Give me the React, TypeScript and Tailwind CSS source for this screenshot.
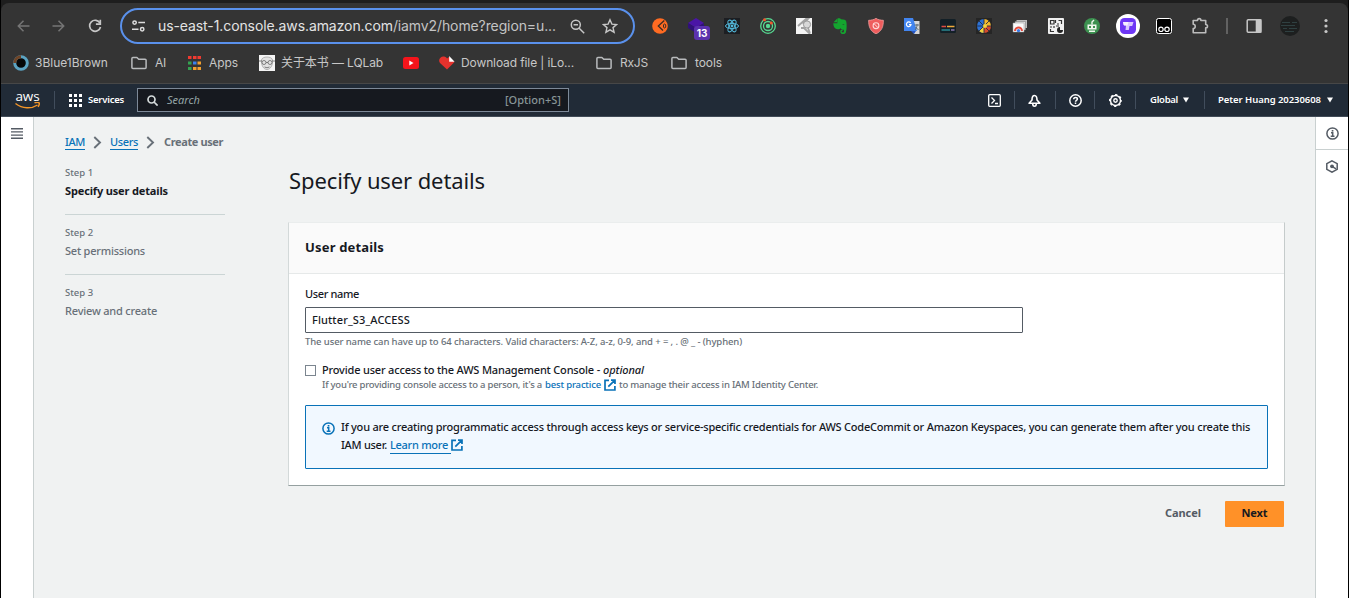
import React from "react";

type TProps = { className?: string; children: string };
function T({ className = "", children }: TProps) {
  return <span className={`whitespace-nowrap ${className}`}>{children}</span>;
}

function Folder() {
  return (
    <svg width="16" height="16" viewBox="0 0 16 16" fill="none" stroke="#b9bbbd" strokeWidth="1.5" strokeLinejoin="round">
      <path d="M0.9 12.6V3.4c0-.6.4-1 1-1h4l1.8 1.9h6.4c.6 0 1 .4 1 1v7.300c0 .6-.4 1-1 1H1.900c-.6 0-1-.4-1-1z" />
    </svg>
  );
}

function ExternalIcon() {
  return (
    <svg className="shrink-0" width="12" height="12" viewBox="0 0 12 12" fill="none" stroke="#0972b8" strokeWidth="1.7">
      <path d="M5 1.300H1v9.700h9.900V7M7 1.100h4v4M10.900 1.200L4.300 7.700" />
    </svg>
  );
}

function InfoIcon({ color, size }: { color: string; size: number }) {
  return (
    <svg width={size} height={size} viewBox="0 0 13 13" fill="none" stroke={color}>
      <circle cx="6.500" cy="6.500" r="5.600" strokeWidth="1.500" />
      <path d="M5 5.800h1.700v3.400M4.700 9.300h3.800" strokeWidth="1.500" />
      <path d="M5.700 3h1.700v1.600H5.700z" fill={color} stroke="none" />
    </svg>
  );
}

function Caret() {
  return <svg width="6" height="6" viewBox="0 0 6 6" fill="#fff"><path d="M0 .4h6L3 5.600z" /></svg>;
}

function Chevron() {
  return (
    <svg width="9" height="13" viewBox="0 0 9 13" fill="none" stroke="#687078" strokeWidth="1.900">
      <path d="M1.300 1l5.700 5.500-5.700 5.500" />
    </svg>
  );
}

function Extensions() {
  const cell = "relative flex h-9 w-9 items-center justify-center";
  return (
    <div className="flex items-center">
      <div className={cell}>
        <svg width="16" height="16" viewBox="0 0 16 16"><circle cx="8" cy="8" r="7.800" fill="#ff6b22" /><path d="M12.300 2.500L6.300 8l4.700 4.500" fill="none" stroke="#3a2c24" strokeWidth="1.300" /><ellipse cx="12.600" cy="8" rx="1.200" ry="2" fill="none" stroke="#3a2c24" strokeWidth="1" /></svg>
      </div>
      <div className={cell}>
        <svg width="16" height="16" viewBox="0 0 16 16"><path d="M8 0l8 5-8 5-8-5z" fill="#4a15a6" /><path d="M0 5l8 5 8-5v5l-8 5-8-5z" fill="#30107a" /></svg>
        <span className="absolute left-[16px] top-[18px] flex h-[14px] w-[16px] items-center justify-center rounded-[3px] bg-[#5b32ad] font-['Inter'] text-[10px] font-bold tracking-[-0.2px] text-white">13</span>
      </div>
      <div className={cell}>
        <svg width="16" height="16" viewBox="0 0 16 16"><path d="M0 0h16v16H0z" fill="#1c1e22" /><g fill="none" stroke="#53b9db" strokeWidth="1"><ellipse cx="8" cy="8" rx="6.500" ry="2.600" /><ellipse cx="8" cy="8" rx="6.500" ry="2.600" transform="rotate(60 8 8)" /><ellipse cx="8" cy="8" rx="6.500" ry="2.600" transform="rotate(120 8 8)" /></g><circle cx="8" cy="8" r="1.400" fill="#53b9db" /></svg>
      </div>
      <div className={cell}>
        <svg width="16" height="16" viewBox="0 0 16 16" fill="none" stroke="#57d992" strokeWidth="1.300"><circle cx="8" cy="8" r="7.300" /><circle cx="8" cy="8" r="4.500" /><circle cx="8" cy="8" r="2.200" fill="#57d992" stroke="none" /><circle cx="4.500" cy="1.700" r="1.500" fill="#f1572c" stroke="none" /><circle cx="11.300" cy="5" r="1.500" fill="#f1572c" stroke="none" /></svg>
      </div>
      <div className={cell}>
        <svg width="16" height="16" viewBox="0 0 16 16"><path d="M0 0h16v16H0z" fill="#f4f4f4" /><path d="M2 8l8-7h2L7 6M5 10h3l6 6M12 10l2 5" fill="none" stroke="#a2a2a2" strokeWidth="1.800" /><circle cx="11" cy="6.500" r="3.600" fill="#d8d8d8" stroke="#999" /></svg>
      </div>
      <div className={cell}>
        <svg width="16" height="16" viewBox="0 0 16 16" fill="#14a52f"><path d="M1.500 4.300L5 .8v3.500zM1.300 5.200h4V.7c1-.7 3-.6 3.700.6 3 0 5 .7 5.300 2.400.6 3.300.5 7.500-.4 10.500-.3 1-1.200 1.800-2.600 1.800-2.300 0-3-1.200-3-2.600 0-1.300.8-2 2.300-2v1.500c-.8 0-1 .2-1 .7 0 .7.600.8 1.400.8.9 0 1-.8 1-1.600 0-1-.5-1.400-1.600-1.400-1 0-1.600-.4-1.800-1.400-.5 1.200-1.600 1.300-3 1.200C2.500 10.900 1.300 8 1.300 5.200z" /><path d="M10.300 6.300c.8-.4 1.800-.2 2.200.6z" fill="#323232" /></svg>
      </div>
      <div className={cell}>
        <svg width="16" height="16" viewBox="0 0 16 16"><path d="M8 .3c2 1.400 4.500 1.900 7.400 2C15.500 9 13.500 13.300 8 15.900 2.500 13.300.5 9 .6 2.300 3.500 2.200 6 1.700 8 .3z" fill="#ef5d5d" stroke="#f4a6a6" strokeWidth=".7" /><circle cx="8" cy="7.700" r="2.900" fill="none" stroke="#ffd7d7" strokeWidth="1.100" /><path d="M6 5.700l4 4" stroke="#ffd7d7" /></svg>
      </div>
      <div className={cell}>
        <svg width="16" height="16" viewBox="0 0 16 16"><path d="M7 3h8.500v13H10z" fill="#d6d6d6" /><path d="M0 0h9l4 13H0z" fill="#4285f0" /><path d="M7 13h5l-2 3z" fill="#2657c4" /><path d="M6.600 4.900A2.300 2.300 0 1 0 7 6.700H5" fill="none" stroke="#fff" strokeWidth="1.200" /><path d="M10.500 7h4.500M13 6v1c0 2-1 4-2 5M11.500 9l3 3" fill="none" stroke="#5e6b73" /></svg>
      </div>
      <div className={cell}>
        <svg width="16" height="16" viewBox="0 0 16 16"><rect y="1" width="16" height="14" rx="1.500" fill="#132027" /><path d="M1.500 8.500H6" stroke="#dd4c45" strokeWidth="1.500" /><path d="M7 8.500h7.500" stroke="#f0a93a" strokeWidth="1.500" /><path d="M1.500 12H10" stroke="#2b8791" strokeWidth="1.500" /><path d="M11 12h3.500" stroke="#8e74b4" strokeWidth="1.500" /></svg>
      </div>
      <div className={cell}>
        <svg width="16" height="16" viewBox="0 0 16 16"><path d="M0 0h16v16H0z" fill="#252525" /><path d="M8 1a7 7 0 0 0 0 14z" fill="#2d72d5" /><path d="M8 1a7 7 0 0 1 7 7H8z" fill="#f4b92c" /><path d="M15 8a7 7 0 0 1-7 7V8z" fill="#d74b2b" /><path d="M8 15a7 7 0 0 1-5-2l5-5z" fill="#f0d23c" /><path d="M8 1v14M1 8h14M3 3l10 10M13 3L3 13" stroke="#222c49" strokeWidth=".9" /><circle cx="9" cy="8" r="2" fill="#f5d33c" /></svg>
      </div>
      <div className={cell}>
        <svg width="16" height="16" viewBox="0 0 16 16"><path d="M4.500 2H15v8H4.500z" fill="#bdbdbd" /><path d="M3 3.500h10.500V12H3z" fill="#dedede" stroke="#777" strokeWidth=".5" /><path d="M1 5h11v9H1z" fill="#fafafa" stroke="#999" strokeWidth=".5" /><path d="M3 13a3.500 3.500 0 0 1 7 0" fill="none" stroke="#e34b3d" strokeWidth="2" /><circle cx="6.500" cy="12.600" r="1.700" fill="#3a7ce8" /></svg>
      </div>
      <div className={cell}>
        <svg width="16" height="16" viewBox="0 0 16 16"><rect width="16" height="16" rx="1" fill="#f0f0f0" /><g fill="none" stroke="#333" strokeWidth="1.200"><path d="M2.500 2.500H6V6H2.500zM10.500 2.500h3V6M7.500 2v3M9 6h2M2 9h2M6 8v2M2.500 11v2.500H6M8 8h3" /></g><path d="M12 9v3h3a3 3 0 1 1-3-3z" fill="#222" /></svg>
      </div>
      <div className={cell}>
        <svg width="16" height="16" viewBox="0 0 16 16"><circle cx="8" cy="8" r="8" fill="#3c9150" /><path d="M3.500 6.500h9v5h-9zM5 12.500h6V14H5z" fill="#f1f8ef" /><path d="M8 6.500V4l2-2" fill="none" stroke="#f1f8ef" strokeWidth="1.400" /><path d="M5 8h2v2H5zM9 8h2v2H9z" fill="#3c9150" /></svg>
      </div>
      <div className={cell}>
        <svg width="24" height="24" viewBox="0 0 24 24"><circle cx="12" cy="12" r="12" fill="#fff" /><rect x="4" y="4" width="16" height="16" rx="4.500" fill="#6e37f5" /><path d="M7 8h10.500l-1.300 4H13.500l-.7 4h-3.300l.5-4.500L7.500 11z" fill="#d9c8ff" /><path d="M7 8h5.500l-1 3.500H8z" fill="#f6f0ff" /></svg>
      </div>
      <div className={cell}>
        <svg width="16" height="16" viewBox="0 0 16 16"><rect x=".5" y=".5" width="15" height="15" rx="2" fill="#000" stroke="#fff" /><g fill="none" stroke="#fff" strokeWidth="1.200"><circle cx="5" cy="11.300" r="2.200" /><circle cx="11" cy="11.300" r="2.200" /></g></svg>
      </div>
      <div className={cell}>
        <svg width="18" height="18" viewBox="0 0 18 18" fill="none" stroke="#bcbcbc" strokeWidth="1.600" strokeLinejoin="round"><path d="M2.200 3.500h4.300C6.500 1 9.900 1 9.900 3.500h4.800v4c2.400 0 2.400 3.400 0 3.400v4.800H2.200v-4.200c2.700-.2 2.700-4 0-4.200z" /></svg>
      </div>
      <div className="flex w-[18px] justify-center"><span className="h-4 w-[1.5px] bg-[#626262]" /></div>
      <div className={cell}>
        <svg width="16" height="16" viewBox="0 0 16 16"><rect x="1.200" y="1.700" width="13.600" height="12.600" rx="1" fill="none" stroke="#c7c7c7" strokeWidth="1.500" /><path d="M9.700 1.200h5.800v13.600H9.700z" fill="#c7c7c7" /></svg>
      </div>
      <div className={cell}>
        <svg width="20" height="20" viewBox="0 0 20 20"><circle cx="10" cy="10" r="10" fill="#1d1f1f" /><path d="M2 6.500h8M12 6.500h5M1 9.500h14M3 12.500h4M9 12.500h8M5 15.500h9" stroke="#34494a" strokeWidth=".8" /></svg>
      </div>
      <div className={cell}>
        <svg width="4" height="16" viewBox="0 0 4 16" fill="#c7c7c7"><circle cx="2" cy="2.500" r="1.600" /><circle cx="2" cy="8" r="1.600" /><circle cx="2" cy="13.500" r="1.600" /></svg>
      </div>
    </div>
  );
}

function Toolbar() {
  return (
    <div className="flex h-[46px] items-center rounded-t-lg bg-[#343434]">
      <div className="flex w-[119px] items-center">
        <svg className="ml-[16px]" width="13" height="12" viewBox="0 0 13 12" fill="none" stroke="#757575" strokeWidth="1.500"><path d="M12.500 6H1.500M6.500 .8L1.300 6l5.200 5.200" /></svg>
        <svg className="ml-[22px]" width="13" height="12" viewBox="0 0 13 12" fill="none" stroke="#757575" strokeWidth="1.500"><path d="M.5 6h11M6.500 .8L11.700 6l-5.200 5.200" /></svg>
        <svg className="ml-[23px]" width="14" height="14" viewBox="0 0 14 14" fill="none" stroke="#c7c7c7" strokeWidth="1.700"><path d="M12 4.200A5.500 5.500 0 1 0 12.500 8" /><path d="M12.300 .8v4.400H7.900" /></svg>
      </div>
      <div className="flex h-9 w-[515px] items-center rounded-full border-2 border-[#5a91ec]">
        <svg className="ml-[10px]" width="13" height="12" viewBox="0 0 13 12" fill="none" stroke="#dcdcdc" strokeWidth="1.500"><circle cx="2.600" cy="2.600" r="1.700" /><path d="M6.300 2.600H13M0 9.200h6.500" /><circle cx="10.200" cy="9.200" r="1.700" /></svg>
        <div className="ml-[13px] w-[412px] whitespace-nowrap font-['Inter'] text-[14px] leading-5">
          <T className="tracking-[-0.09px] text-[#e3e3e3]">us-east-1.console.aws.amazon.com</T><T className="tracking-[-0.11px] text-[#c4c4c4]">/iamv2/home?region=u...</T>
        </div>
        <svg width="15" height="15" viewBox="0 0 15 15" fill="none" stroke="#c7c7c7" strokeWidth="1.500"><circle cx="5.800" cy="5.800" r="4.500" /><path d="M3.600 5.800H8M9.200 9.200l5 5" /></svg>
        <svg className="ml-[17px]" width="16" height="16" viewBox="0 0 16 16" fill="none" stroke="#c7c7c7" strokeWidth="1.400"><path d="M8 1.800l1.900 4.300 4.700.4-3.600 3.100 1.100 4.600L8 11.800l-4.100 2.400L5 9.600 1.400 6.500l4.700-.4z" /></svg>
      </div>
      <div className="w-[7px]" />
      <Extensions />
    </div>
  );
}

function Bookmarks() {
  const item = "flex items-center";
  return (
    <div className="flex h-[28px] items-center pl-[12px] font-['Inter','Noto_Sans_CJK_SC',sans-serif] text-[12px] leading-4 text-[#c7c7c7]">
      <div className={`${item} w-[118px] gap-[6px]`}>
        <svg width="16" height="16" viewBox="0 0 16 16"><circle cx="8" cy="8" r="6.300" fill="#050708" stroke="#5ba3c2" strokeWidth="3" /><path d="M1.700 8A6.300 6.300 0 0 1 8 1.700" fill="none" stroke="#704426" strokeWidth="3" /></svg>
        <T>3Blue1Brown</T>
      </div>
      <div className={`${item} w-[57px] gap-[8px]`}><Folder /><T className="tracking-[-0.2px]">AI</T></div>
      <div className={`${item} w-[71px] gap-[8px]`}>
        <svg width="13" height="14" viewBox="0 0 13 14"><path d="M0 0h3.500v3H0zM5 0h3.500v3H5zM9.500 0H13v3H9.500z" fill="#f03a30" /><path d="M0 5.500h3.500v3H0zM0 11h3.500v3H0z" fill="#34a351" /><path d="M5 5.500h3.500v3H5z" fill="#3b80ed" /><path d="M9.500 5.500H13v3H9.500zM5 11h3.500v3H5zM9.500 11H13v3H9.500z" fill="#f2a02e" /></svg>
        <T className="tracking-[-0.08px]">Apps</T>
      </div>
      <div className={`${item} w-[144px] gap-[6px]`}>
        <svg width="16" height="16" viewBox="0 0 16 16"><path d="M0 0h16v16H0z" fill="#f4f4f4" /><path d="M2.500 5C3 1 13 1 13.500 5c.5 5-2 9.500-5.500 9.500S2 10 2.500 5z" fill="#e2e2e2" stroke="#999" strokeWidth=".7" /><g fill="none" stroke="#666" strokeWidth=".8"><circle cx="5" cy="7.500" r="2" /><circle cx="11" cy="7.500" r="2" /><path d="M0 6h3M7 7.500h2M13 6h3M5.500 12q2.500 1.500 5 0" /></g></svg>
        <T className="tracking-[-0.1px]">关于本书 — LQLab</T>
      </div>
      <div className="w-[36px]">
        <svg width="16" height="12" viewBox="0 0 16 12"><rect width="16" height="12" rx="2.500" fill="#f5141b" /><path d="M6.300 3.500v5L10.500 6z" fill="#fff" /></svg>
      </div>
      <div className={`${item} w-[157px] gap-[6px]`}>
        <svg width="16" height="14" viewBox="0 0 16 14"><path d="M8 13.600L1 7C-1.500 3.500 2 0 5 .6c1.500.2 2.500 1 3 2L10 1l5.500 5z" fill="#e5322d" /><path d="M10.200 0l5.400 5.800h-5.400z" fill="#fff" /></svg>
        <T className="tracking-[-0.11px]">Download file | iLo...</T>
      </div>
      <div className={`${item} w-[75px] gap-[8px]`}><Folder /><T className="tracking-[-0.2px]">RxJS</T></div>
      <div className={`${item} gap-[8px]`}><Folder /><T className="tracking-[-0.09px]">tools</T></div>
    </div>
  );
}

function AwsNav() {
  const sep = "h-[18px] w-px bg-[#414d5c]";
  return (
    <div className="flex h-[33px] items-center border-b border-[#414b57] bg-[#212b37] font-['Noto_Sans'] text-[9.5px] leading-4 text-white">
      <div className="flex w-[53px] justify-center">
        <div className="flex w-[26px] flex-col items-center">
          <span className="-mt-px font-['Open_Sans'] text-[13.5px] font-medium leading-[10px] tracking-[-0.1px]">aws</span>
          <svg className="mt-px" width="26" height="7" viewBox="0 0 26 7" fill="none" stroke="#f39528" strokeWidth="1.500"><path d="M.5 1.500c7 5.500 16 5.500 22 1.500M19.500 .8c2-.5 4-.5 4.600.1.500.8-.2 2.700-1 4" /></svg>
        </div>
      </div>
      <span className={sep} />
      <div className="flex w-[82px] items-center">
        <svg className="ml-[14px]" width="13" height="13" viewBox="0 0 13 13" fill="#fff"><path d="M0 0h3v3H0zM5 0h3v3H5zM10 0h3v3h-3zM0 5h3v3H0zM5 5h3v3H5zM10 5h3v3h-3zM0 10h3v3H0zM5 10h3v3H5zM10 10h3v3h-3z" /></svg>
        <T className="ml-[6px] font-semibold tracking-[-0.22px]">Services</T>
      </div>
      <div className="flex h-[24px] w-[432px] items-center border border-[#7d8998] bg-[#16191f] pl-[9px] pr-[7px]">
        <svg width="11" height="11" viewBox="0 0 11 11" fill="none" stroke="#d5dbdb" strokeWidth="1.700"><circle cx="4.500" cy="4.500" r="3.500" /><path d="M7 7l3.600 3.600" /></svg>
        <T className="ml-[9px] text-[11px] italic text-[#95a5a6]">Search</T>
        <span className="flex-1" />
        <T className="text-[11px] font-medium tracking-[0.02px] text-[#879596]">[Option+S]</T>
      </div>
      <span className="flex-1" />
      <div className="flex items-center">
        <div className="flex w-[40px] justify-center">
          <svg width="13" height="13" viewBox="0 0 13 13" fill="none" stroke="#fff" strokeWidth="1.300"><rect x=".7" y=".7" width="11.600" height="11.600" rx="1" /><path d="M3.500 3.500l3 3-3 3M7 9.500h3" /></svg>
        </div>
        <span className={sep} />
        <div className="flex w-[40px] justify-center pr-[2px]">
          <svg width="13" height="13" viewBox="0 0 13 13" fill="none" stroke="#fff" strokeWidth="1.600"><path d="M1.100 9.200h10.800L9 6C9 3 8 1.500 6.500 1.500S4 3 4 6z" strokeLinejoin="round" /><path d="M4.700 9.500c0 3.600 3.600 3.600 3.600 0" /></svg>
        </div>
        <span className={sep} />
        <div className="flex w-[38px] justify-center">
          <svg width="13" height="13" viewBox="0 0 13 13" fill="none" stroke="#fff" strokeWidth="1.500"><circle cx="6.500" cy="6.500" r="5.700" /><path d="M4.700 5.200c0-2.400 3.700-2.200 3.700-.2 0 1.300-1.900 1.300-1.900 2.700M6.500 8.600v1.500" /></svg>
        </div>
        <span className={sep} />
        <div className="flex w-[40px] justify-center">
          <svg width="13" height="13" viewBox="0 0 13 13" fill="none" stroke="#fff"><circle cx="6.500" cy="6.500" r="5" strokeWidth="1.400" /><circle cx="6.500" cy="6.500" r="5.900" strokeWidth="1.200" strokeDasharray="2.300 2.330" strokeDashoffset="1.100" /><circle cx="6.500" cy="6.500" r="1.700" strokeWidth="1.400" /></svg>
        </div>
        <span className={sep} />
        <div className="flex w-[68px] items-center gap-[5px] pl-[14px]"><T className="font-semibold tracking-[-0.27px]">Global</T><Caret /></div>
        <span className={sep} />
        <div className="flex w-[143px] items-center gap-[6px] pl-[13px]"><T className="font-semibold tracking-[-0.06px]">Peter Huang 20230608</T><Caret /></div>
      </div>
    </div>
  );
}

function Step({ n, label, labelClass }: { n: string; label: string; labelClass: string }) {
  return (
    <div className="flex flex-col text-[#687078]">
      <T className="text-[9.5px] leading-[18px]">{n}</T>
      <T className={`text-[11px] leading-[18px] ${labelClass}`}>{label}</T>
    </div>
  );
}

function UserDetails() {
  return (
    <div className="h-[264px] w-[997px] border border-b-[#95a0a0] border-l-[#d3d9d9] border-r-[#c5cbcb] border-t-[#eaeded] bg-white text-[#16191f]">
      <div className="flex h-[51px] items-center border-b border-[#e6e9e9] bg-[#fafafa] pl-[16px]">
        <T className="text-[13px] font-bold tracking-[0.17px]">User details</T>
      </div>
      <div className="flex flex-col px-[16px] pt-[11px]">
        <T className="text-[11px] leading-[18px] tracking-[-0.36px]">User name</T>
        <div className="mt-[4px] flex h-[26px] w-[718px] items-center rounded-[1px] border border-[#545b64] pl-[6px]">
          <T className="text-[11px] tracking-[0.12px]">Flutter_S3_ACCESS</T>
        </div>
        <T className="text-[9.5px] leading-[18px] tracking-[-0.11px] text-[#687078]">The user name can have up to 64 characters. Valid characters: A-Z, a-z, 0-9, and + = , . @ _ - (hyphen)</T>
        <div className="mt-[11px] flex">
          <span className="mt-[3px] h-[11px] w-[11px] border border-[#7b858f]" />
          <div className="ml-[6px] flex flex-col">
            <div className="flex h-[16px] items-center gap-[3px] text-[11px]"><T className="tracking-[-0.182px]">Provide user access to the AWS Management Console -</T><T className="italic tracking-[-0.07px]">optional</T></div>
            <div className="flex h-[14px] items-center text-[9.5px] text-[#687078]">
              <T className="tracking-[-0.225px]">If you're providing console access to a person, it's a</T>
              <T className="ml-[3px] mr-[3px] tracking-[-0.17px] text-[#0972b8]">best practice</T><ExternalIcon />
              <T className="ml-[3px] tracking-[-0.216px]">to manage their access in IAM Identity Center.</T>
            </div>
          </div>
        </div>
        <div className="mt-[13px] flex h-[64px] rounded-[1px] border border-[#0972b8] bg-[#f1f8ff] pl-[16px] pt-[12px] text-[11px] leading-[18px]">
          <div className="mt-[4px] w-[19px] shrink-0"><InfoIcon color="#0972b8" size={13} /></div>
          <div>
            <div className="flex"><T className="tracking-[-0.216px]">If you are creating programmatic access through access keys or service-specific credentials for AWS CodeCommit or Amazon Keyspaces, you can generate them after you create this</T></div>
            <div className="flex items-center">
              <T className="tracking-[-0.28px]">IAM user.</T>
              <div className="ml-[3px] flex h-[17px] w-[61px] items-center border-b border-[#0972b8] text-[#0972b8]"><T className="tracking-[-0.28px]">Learn more</T></div>
              <ExternalIcon />
            </div>
          </div>
        </div>
      </div>
    </div>
  );
}

function Console() {
  return (
    <div className="flex h-[481px] bg-[#f0f2f2] font-['Noto_Sans'] font-medium">
      <div className="flex w-[33px] justify-center border-r border-[#c9d0d0] bg-white pt-[11px]">
        <svg width="12" height="11" viewBox="0 0 12 11" fill="#545b64"><path d="M0 0h12v1.400H0zM0 3.200h12v1.400H0zM0 6.400h12v1.400H0zM0 9.600h12V11H0z" /></svg>
      </div>
      <div className="flex w-[1281px] flex-col pl-[31px] pt-[16px]">
        <div className="flex h-[18px] items-center text-[11px] text-[#687078]">
          <div className="h-[16px] w-[20px] border-b border-[#0972b8] leading-[16px] text-[#0972b8]"><T className="tracking-[-0.4px]">IAM</T></div>
          <span className="ml-[8px] mr-[8px]"><Chevron /></span>
          <div className="h-[16px] w-[28px] border-b border-[#0972b8] leading-[16px] text-[#0972b8]"><T className="tracking-[-0.36px]">Users</T></div>
          <span className="ml-[8px] mr-[9px]"><Chevron /></span>
          <T className="font-bold tracking-[-0.38px]">Create user</T>
        </div>
        <div className="flex">
          <div className="flex w-[223px] flex-col pt-[13px]">
            <Step n="Step 1" label="Specify user details" labelClass="font-bold tracking-[-0.15px] text-[#16191f]" />
            <span className="mb-[9px] mt-[14px] h-px w-[160px] bg-[#cbd5d5]" />
            <Step n="Step 2" label="Set permissions" labelClass="tracking-[-0.22px]" />
            <span className="mb-[9px] mt-[14px] h-px w-[160px] bg-[#cbd5d5]" />
            <Step n="Step 3" label="Review and create" labelClass="tracking-[-0.2px]" />
          </div>
          <div className="flex flex-col pt-[13px]">
            <T className="h-[58px] pl-px text-[22px] font-normal leading-[32px] tracking-[-0.11px] text-[#16191f]">Specify user details</T>
            <UserDetails />
            <div className="mt-[15px] flex items-center justify-end pr-px text-[11px] font-bold">
              <T className="mr-[24px] pb-[2px] tracking-[-0.05px] text-[#545b64]">Cancel</T>
              <div className="flex h-[26px] w-[59px] items-center justify-center rounded-[1px] bg-[#ff9128] pb-[2px] text-[#16191f]"><T className="tracking-[-0.1px]">Next</T></div>
            </div>
          </div>
        </div>
      </div>
      <div className="flex w-[33px] flex-col items-center border-l border-[#c9d0d0] bg-white">
        <div className="flex h-[33px] w-full items-center justify-center border-b border-[#c9d0d0]"><InfoIcon color="#545b64" size={13} /></div>
        <div className="flex h-[33px] items-center justify-center">
          <svg width="12" height="13" viewBox="0 0 12 13" fill="none" stroke="#545b64" strokeWidth="1.500"><path d="M6 .8l5.200 2.900v5.600L6 12.200.8 9.300V3.700z" /><circle cx="6" cy="6.300" r="1.900" fill="#545b64" stroke="none" /><path d="M6 6.300l4 2.500" /></svg>
        </div>
      </div>
    </div>
  );
}

export default function App() {
  return (
    <div className="flex h-[598px] w-[1349px] flex-col overflow-hidden border-x border-black bg-[#343434]">
      <div className="bg-[#1e1e1e] pt-[3px]"><Toolbar /></div>
      <Bookmarks />
      <div className="h-[7px] border-b border-[#474747]" />
      <AwsNav />
      <Console />
    </div>
  );
}
